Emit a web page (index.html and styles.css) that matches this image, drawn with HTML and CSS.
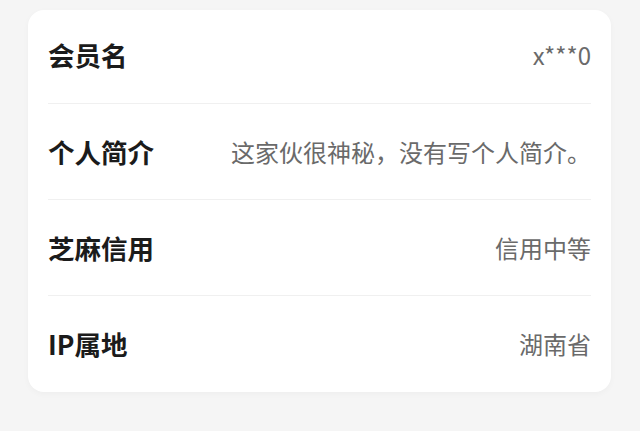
FILE: index.html
```html
<!DOCTYPE html>
<html lang="zh-CN">
<head>
	<meta charset="utf-8">
	<title>个人资料</title>
	<link rel="stylesheet" href="styles.css">
</head>
<body>
<div class="card">
	<div class="row first">
		<span class="label">会员名</span>
		<span class="value">x***0</span>
	</div>
	<div class="row">
		<span class="label">个人简介</span>
		<span class="value">这家伙很神秘，没有写个人简介。</span>
	</div>
	<div class="row">
		<span class="label">芝麻信用</span>
		<span class="value">信用中等</span>
	</div>
	<div class="row last">
		<span class="label">IP属地</span>
		<span class="value">湖南省</span>
	</div>
</div>
</body>
</html>
```

FILE: styles.css
```css
html,
body {
	margin: 0;
	padding: 0;
	background: #f5f5f5;
}

body {
	font-family: "Noto Sans CJK SC", "Noto Sans", sans-serif;
	width: 640px;
	height: 431px;
	overflow: hidden;
	padding-top: 10px;
	box-sizing: border-box;
}

.card {
	margin: 0 29px 0 28px;
	background: #fff;
	border-radius: 16px;
	padding: 0 20px;
	box-shadow: 0 2px 6px rgba(0, 0, 0, 0.03);
}

.row {
	display: flex;
	align-items: center;
	justify-content: space-between;
	height: 96px;
	padding-bottom: 1px;
	box-sizing: border-box;
	border-bottom: 1px solid #f0f0f0;
}

.row.first {
	height: 94px;
	padding-bottom: 5px;
}

.row.last {
	border-bottom: none;
	height: 96px;
}

.label {
	font-size: 26.5px;
	font-weight: bold;
	color: #1b1b1b;
}

.value {
	font-size: 24px;
	color: #6a6a6a;
}
```
